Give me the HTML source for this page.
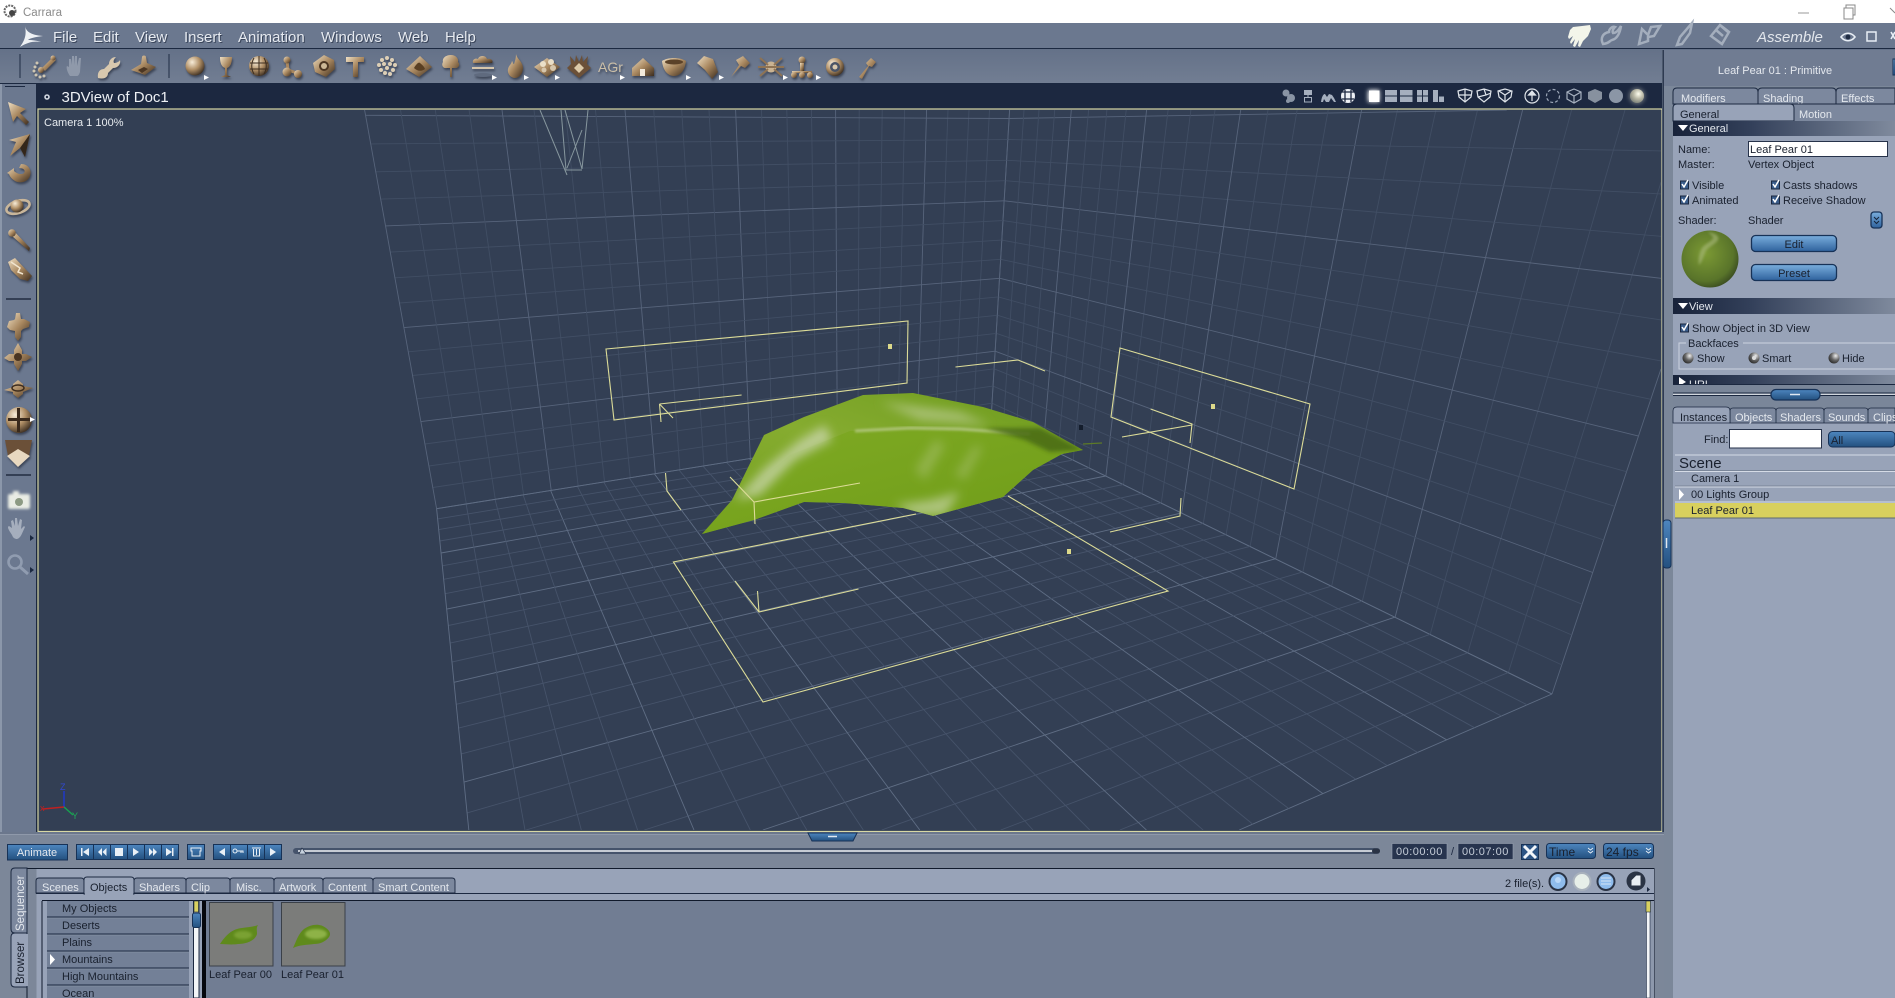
<!DOCTYPE html>
<html><head><meta charset="utf-8"><title>Carrara</title>
<style>
html,body{margin:0;padding:0;width:1895px;height:998px;overflow:hidden;background:#6f7b90}
svg{display:block;font-family:"Liberation Sans",sans-serif}
.m{font-size:15px;fill:#e6eaf0;filter:drop-shadow(1px 1px 0 rgba(20,30,50,.55))}
.s{font-size:11px;fill:#19202e}
.l{font-size:11px;fill:#e4e8ee}
.b{filter:drop-shadow(1px 2px 1px rgba(20,25,40,.55))}
</style></head><body>
<svg id="S" xmlns="http://www.w3.org/2000/svg" width="1895" height="998" viewBox="0 0 1895 998">
<defs>
<linearGradient id="hd" x1="0" x2="1" y1="0" y2="0"><stop offset="0" stop-color="#18233a"/><stop offset=".35" stop-color="#33405a"/><stop offset="1" stop-color="#7f8a9d"/></linearGradient>
<linearGradient id="blu" x1="0" x2="0" y1="0" y2="1"><stop offset="0" stop-color="#7aaedd"/><stop offset="1" stop-color="#2f629d"/></linearGradient>
<linearGradient id="blu2" x1="0" x2="0" y1="0" y2="1"><stop offset="0" stop-color="#4d86bf"/><stop offset="1" stop-color="#23507f"/></linearGradient>
<linearGradient id="bz" x1="0" x2="1" y1="0" y2="1"><stop offset="0" stop-color="#f0e0c4"/><stop offset=".5" stop-color="#a8875f"/><stop offset="1" stop-color="#3c2c1e"/></linearGradient>
<radialGradient id="bs" cx=".35" cy=".3" r=".8"><stop offset="0" stop-color="#f7ecd8"/><stop offset=".5" stop-color="#b08f66"/><stop offset="1" stop-color="#2e2218"/></radialGradient>
<radialGradient id="shd" cx=".42" cy=".4" r=".7"><stop offset="0" stop-color="#7c9a34"/><stop offset=".7" stop-color="#59742a"/><stop offset="1" stop-color="#2c3a1c"/></radialGradient>
<radialGradient id="rad" cx=".65" cy=".3" r=".8"><stop offset="0" stop-color="#eee"/><stop offset=".5" stop-color="#666"/><stop offset="1" stop-color="#222"/></radialGradient>
<radialGradient id="sph" cx=".6" cy=".35" r=".7"><stop offset="0" stop-color="#fffff0"/><stop offset=".5" stop-color="#b9b8a6"/><stop offset="1" stop-color="#7a7f78"/></radialGradient>
<linearGradient id="lf" x1="0" x2="1" y1="1" y2="0"><stop offset="0" stop-color="#74a01e"/><stop offset=".5" stop-color="#86ac30"/><stop offset="1" stop-color="#6c9a1c"/></linearGradient>
<linearGradient id="lf2" x1="0" x2="1" y1="0" y2="1"><stop offset="0" stop-color="#7faa24"/><stop offset="1" stop-color="#6f9c18"/></linearGradient>
<linearGradient id="top" x1="0" x2="0" y1="0" y2="1"><stop offset="0" stop-color="#647188"/><stop offset="1" stop-color="#727e93"/></linearGradient>
<filter id="bl" x="-40%" y="-40%" width="180%" height="180%"><feGaussianBlur stdDeviation="5"/></filter>
<filter id="bl1" x="-30%" y="-30%" width="160%" height="160%"><feGaussianBlur stdDeviation="1.2"/></filter>
<filter id="bl2" x="-40%" y="-40%" width="180%" height="180%"><feGaussianBlur stdDeviation="2"/></filter>
<filter id="gl" x="-60%" y="-60%" width="220%" height="220%"><feGaussianBlur stdDeviation="2"/></filter>
<clipPath id="vp"><rect x="38" y="110" width="1623" height="720"/></clipPath>
<clipPath id="rc"><rect x="1673" y="375" width="222" height="9"/></clipPath>
</defs>

<!-- title bar -->
<rect width="1895" height="23" fill="#fff"/>
<g transform="translate(10,11)"><circle r="5.5" fill="none" stroke="#666" stroke-width="2" stroke-dasharray="2 1"/><circle cx="2" cy="2" r="3" fill="#444"/></g>
<text x="23" y="16" font-size="11.5" fill="#8b8b8b">Carrara</text>
<path d="M1798 13h11" stroke="#999" fill="none"/>
<path d="M1844 8h9v11h-9zM1846 8V5h9v10h-2" stroke="#888" fill="none"/>
<path d="M1890 8l5 5" stroke="#888" fill="none"/>

<!-- menubar + toolbar -->
<rect y="23" width="1895" height="26" fill="#6b788f"/>
<rect y="48" width="1895" height="1.5" fill="#1b2840"/>
<rect y="49" width="1895" height="35" fill="url(#top)"/>
<rect y="83" width="1664" height="1.5" fill="#1b2840"/>
<path d="M25 26C26 31 30 35 43 36 36 37 30 38 28 40 33 40 38 41 41 42 34 41 28 42 20 47 24 41 27 36 25 26z" fill="#eef1f4"/>
<g class="m">
<text x="53" y="42">File</text><text x="93" y="42">Edit</text><text x="135" y="42">View</text><text x="184" y="42">Insert</text><text x="238" y="42">Animation</text><text x="321" y="42">Windows</text><text x="398" y="42">Web</text><text x="445" y="42">Help</text>
</g>
<!-- top right mode icons -->
<path d="M1570 30l3-3 9-1 8-1 1 4-3 7-5 5-3 6-2-1 1-6-4 7-2-1 2-7-4 5-1-2 3-6-4 3-1-2z" fill="#f3f5ea"/>
<path d="M1603 44c-3-6 0-11 6-12 0-3 3-6 6-5-2 2-3 4-2 6 3 0 5-2 8-7-1 7-4 13-9 14-3 1-2 3-9 4z" fill="none" stroke="#a4aebd" stroke-width="2.5"/>
<path d="M1639 44l3-15 6 6 3-8 9-1-6 10-6 1 0 4z" fill="none" stroke="#a4aebd" stroke-width="2.5"/>
<path d="M1677 45l3-8 12-14-2 10-8 11z" fill="none" stroke="#a4aebd" stroke-width="2.5"/>
<path d="M1711 36l9-11 9 7-7 12zM1716 30l7 6M1721 26l7 6" fill="none" stroke="#a4aebd" stroke-width="2.5"/>
<text x="1757" y="42" font-size="15" font-style="italic" fill="#e2e6ec">Assemble</text>
<g fill="none" stroke="#e8eef5"><path d="M1841 37c4-5 10-5 14 0-4 5-10 5-14 0z" stroke-width="1.6"/><circle cx="1848" cy="37" r="2.4" fill="#1f2c44" stroke="none"/><rect x="1867" y="32" width="9" height="9" stroke-width="1.5"/><path d="M1891 32l4 7M1895 32l-4 7" stroke-width="1.6"/></g>

<!-- toolbar icons -->
<path d="M20 54v24M169 54v24" stroke="#1f2c44"/>
<g class="b" fill="url(#bz)" stroke="none">
<g transform="translate(45,67)"><path d="M-3 1L8-10l3 3L0 4z"/><circle cx="8" cy="-9" r="2.5"/><circle cx="-4" cy="3" r="3"/><g fill="#cfc6b2"><circle cx="-10" cy="0" r="1.5"/><circle cx="-11" cy="4" r="1.5"/><circle cx="-9" cy="8" r="1.5"/><circle cx="-5" cy="10" r="1.5"/><circle cx="-1" cy="9" r="1.5"/><circle cx="-8" cy="-4" r="1.5"/></g></g>
<g transform="translate(109,67)"><path d="M-11 11c-1-7 3-9 6-9l5-5c0-4 3-7 7-7-2 2-3 4-2 6 2 0 5-1 6-3 1 4-2 8-7 8l-5 5c0 3-2 7-10 5z" fill="#d8c8ae"/></g>
<g transform="translate(143,67)"><path d="M-12 3L-2-3l1-7c0-2 4-2 4 0l1 6 9 4-11 8z"/><path d="M-5 3l6-3 4 2-6 4z" fill="#4c3622"/></g>
<circle cx="195" cy="66" r="9.5" fill="url(#bs)"/>
<g transform="translate(226,67)"><path d="M-6-10H6C6-3 4 0 1 1v7l4 2H-5l4-2V1C-4 0-6-3-6-10z"/></g>
<g transform="translate(259,66)"><circle r="10" fill="url(#bs)"/><path d="M-9-3H9M-9 3H9M0-10V10M-5-8c-3 5-3 11 0 16M5-8c3 5 3 11 0 16" stroke="#3c2c1e" fill="none"/></g>
<g transform="translate(291,67)"><path d="M-4-6l1 9L6 6" stroke="#a8875f" stroke-width="3" fill="none"/><circle cx="-4" cy="-7" r="3.5"/><circle cx="-4" cy="5" r="4.5"/><circle cx="7" cy="7" r="4"/></g>
<g transform="translate(324,66)"><path d="M0-11L10-6 11 3 2 11-9 6-11-3z"/><circle r="5" fill="#4c3622"/><circle r="3" fill="#cdb896"/></g>
<g transform="translate(355,67)"><path d="M-9-10H9v5H3V10H-2V-5H-9z"/></g>
<g transform="translate(387,66)" fill="#ddcfb6"><circle cx="0" cy="-8" r="2"/><circle cx="5" cy="-6" r="2"/><circle cx="-5" cy="-6" r="2"/><circle cx="-8" cy="-1" r="2"/><circle cx="8" cy="-1" r="2"/><circle cx="-3" cy="-2" r="2"/><circle cx="3" cy="-2" r="2"/><circle cx="0" cy="2" r="2"/><circle cx="-6" cy="4" r="2"/><circle cx="6" cy="4" r="2"/><circle cx="-2" cy="7" r="2"/><circle cx="3" cy="8" r="2"/></g>
<g transform="translate(419,67)"><path d="M-13 2L1-11l12 11L0 10z"/><path d="M-5 1c3-5 5-6 6-5s4 3 5 6c-4 3-8 2-11-1z" fill="#5a3f22"/></g>
<g transform="translate(451,66)"><path d="M0-11c5 0 8 4 7 7 3 3 0 7-4 6l-2 0V11H-1V2l-3 0c-4 1-6-3-4-6-1-4 3-7 8-7z"/></g>
<g transform="translate(483,62)"><path d="M-10 1c-1-4 3-5 5-4 1-4 8-4 9 0 4-1 7 2 5 4z"/><path d="M-11 5H11v2H-11z" fill="#d6c6ac"/><ellipse cy="13" rx="9" ry="2" fill="#5f6a7e"/></g>
<g transform="translate(515,66)"><path d="M1-12c1 5 7 8 7 14 0 6-4 10-8 10s-8-4-7-9c1-4 3-4 4-8 1 1 1 3 2 3 1-3 2-6 2-10z"/></g>
<g transform="translate(547,67)"><path d="M-13 0L0-9 13 0 0 10z"/><circle cx="-4" cy="-3" r="3" fill="#eadfc8"/><circle cx="4" cy="-5" r="3" fill="#eadfc8"/><circle cx="6" cy="1" r="3" fill="#d6c6ac"/><circle cx="-3" cy="3" r="2.5" fill="#d6c6ac"/></g>
<g transform="translate(579,67)"><path d="M-12 1L-8-3-9-11-4-5-3-12 0-5 3-12 4-5 9-11 8-3 12 1 0 11z" fill="#6b5038"/><path d="M-5 1L0-4 5 1 0 6z" fill="#dcc9a8"/></g>
<text x="598" y="72" font-size="14" fill="#cbbfa8">AGr</text>
<g transform="translate(643,67)"><path d="M-11 1L0-9 11 1V9H-11z"/><rect x="-3" y="2" width="5" height="7" fill="#f3eadb"/></g>
<g transform="translate(674,67)"><path d="M-12-6C-6-10 6-10 12-6 11 4 6 9 0 9S-11 4-12-6z"/><ellipse cy="-5" rx="9" ry="2.5" fill="#5b4229"/></g>
<g transform="translate(707,67)"><path d="M-10-4L-3-11 6-8 11 5 5 12-2 3z"/></g>
<g transform="translate(740,67)"><path d="M-9 10L-1-2-4-7 3-11 10-4 5 1 1-1z"/></g>
<g transform="translate(771,67)"><circle r="5.5" fill="#c9b393"/><path d="M-11-9L-3-2M11-9L3-2M-13 0H13M-11 9L-3 2M11 9L3 2" stroke="#8e7354" stroke-width="2"/></g>
<g transform="translate(802,67)"><circle cy="-7" r="3.5"/><rect x="-2" y="-4" width="4" height="8"/><path d="M-10 4H10v2H-10z"/><circle cx="-8" cy="8" r="3"/><circle cx="8" cy="8" r="3"/><circle cy="8" r="3"/></g>
<g transform="translate(835,67)"><circle r="9" fill="url(#bs)"/><circle r="5" fill="#4a5466"/><circle r="2.5" fill="#d9c9ae"/></g>
<g transform="translate(867,67)"><path d="M-8 10L1-1-1-4 4-9 9-5 5 0 2-1-5 12z"/></g>
</g>
<g transform="translate(77,67)" fill="#8f99aa"><path d="M-7 9c-3-4-4-9-3-10l2 1v-8l2 0 1 6v-9h2l1 9V-11h2l0 10 2-8 2 0-1 14c-1 3-2 4-3 4z"/></g>
<g fill="#fff"><path d="M204 75l5 2.5-5 2.5z"/><path d="M492 75l5 2.5-5 2.5zM524 75l5 2.5-5 2.5zM555 75l5 2.5-5 2.5zM620 75l5 2.5-5 2.5zM686 75l5 2.5-5 2.5zM719 75l5 2.5-5 2.5zM783 75l5 2.5-5 2.5zM816 75l5 2.5-5 2.5z"/></g>

<!-- left strip -->
<rect y="84" width="36" height="750" fill="#6b788f"/><rect y="84" width="2" height="750" fill="#8b97aa"/>
<rect x="5" y="86" width="20" height="1" fill="#1b2840"/>
<path d="M6 299h25M6 475h25" stroke="#141d30" stroke-width="1.2"/>
<g class="b" fill="url(#bz)">
<path d="M8 102l18 7-6 4 9 9-3 3-9-9-4 6z"/>
<path d="M30 134l-5 23-5-9-10 8 6-14-7-2z"/><path d="M30 134l-5 23-5-9z" fill="#33261a"/>
<path d="M21 164c8 0 11 7 9 12-2 6-10 8-15 5-3-2-5-4-6-7l-2-1 7-5 0 3c3 3 8 4 10 2 2-3-1-5-5-5z"/>
<ellipse cx="18" cy="207" rx="12" ry="6" transform="rotate(-18 18 207)" fill="none" stroke="#c9b69a" stroke-width="2.6"/><circle cx="17" cy="206" r="6.5" fill="url(#bs)"/>
<path d="M9 232l4-2 17 18-1 3-17-15z"/><circle cx="12" cy="233" r="3.8"/>
<path d="M8 262l7-4 17 18-4 5-8-2-9-9z"/><path d="M11 262l9 6-2 4 5 2" fill="none" stroke="#f1e5cf" stroke-width="1.5"/>
<path d="M16 313h4l1 6h3l6 3-1 5-6 2-2 2v6l-3 4-3-4v-6l-5-1-3-3 2-6 5-1 1-1z"/>
<path d="M18 343l4 7v4h4l6 3-6 4h-4v3l-4 7-4-7v-3h-5l-5-3 5-4h5v-4z"/><circle cx="18" cy="357" r="4" fill="#4a3522"/>
<path d="M18 380l5 4v2l10 2-10 4v2l-5 4-5-4v-2l-9-2 9-3v-3z"/><ellipse cx="18" cy="388" rx="6" ry="3" fill="none" stroke="#3e2d1e" stroke-width="1.5"/>
<circle cx="19" cy="420" r="13" fill="url(#bs)"/><path d="M8 418h22v3H8zM17 408h3v24h-3z" fill="#3a2a1c"/>
<path d="M5 440L32 440 29 456 18 450 8 456Z" fill="#6b5038"/><path d="M18 449L30 456 18 467 7 456Z" fill="#e8d8c0"/>
</g>
<path d="M30 417l5 2.5-5 2.5z" fill="#fff"/>
<g fill="#e9ece4" filter="url(#bl1)"><rect x="8" y="494" width="22" height="15" rx="2"/><rect x="13" y="491" width="6" height="3"/></g><circle cx="19" cy="502" r="4" fill="#8c9a83"/>
<path d="M12 535c-4-6-5-8-3-9l3 2-1-7 2-1 2 6 0-8 2 0 1 8 2-7 2 1-1 9 3-3 1 1c-3 6-4 11-8 12-2 0-4-1-5-4z" fill="#a5aebd"/>
<path d="M30 535l4 3-4 3z" fill="#1b2840"/>
<circle cx="15" cy="562" r="6.5" fill="none" stroke="#909cb0" stroke-width="2.6"/><path d="M20 567l8 7" stroke="#909cb0" stroke-width="3"/>
<path d="M30 567l4 3-4 3z" fill="#1b2840"/>

<!-- 3D view title -->
<rect x="36" y="84" width="1628" height="748" fill="#1c2840"/>
<circle cx="47" cy="97" r="2" fill="none" stroke="#d0d6df" stroke-width="1.6"/>
<text x="61.5" y="102" font-size="15" fill="#eef1f5">3DView of Doc1</text>
<!-- viewport -->
<rect x="38" y="109" width="1624" height="722.5" fill="#333f54" stroke="#d8d8a4" stroke-width="1.2"/>
<g id="grid" clip-path="url(#vp)" fill="none" stroke-width="1">
<path d="M540 110l27 65M561 110l5 60 16 0M588 110l-6 59M565 110l17 59M582 130l-15 38" stroke="#87979e" fill="none"/>
</g>
<g clip-path="url(#vp)" fill="none" stroke="#dcdc98" stroke-width="1.1">
<path d="M606 349L908 321 907 383 614 420Z"/>
<path d="M659.5 404L741.6 395M659.5 404L661 422M659.5 404L673 418"/>
<path d="M955.5 367L1018 360 1045 371"/>
<path d="M1120 348L1310 404 1294 489 1111 417Z"/>
<path d="M1150.6 409L1192 424 1190 443M1192 425L1122 437"/>
<path d="M916 514L673.4 562 763 702 1168 591 1008 496"/>
<path d="M858.5 589L759 612 735 581M759 612L757.5 591"/>
<path d="M665.5 473L667 491 681 510"/>
<path d="M1181 498L1180 516 1110 532"/>
</g>
<g fill="#dcd98a"><rect x="888" y="344" width="4" height="5"/><rect x="1211" y="404" width="4" height="5"/><rect x="1067" y="549" width="4" height="5"/></g>
<rect x="1079" y="425" width="4" height="5" fill="#141d2c"/>
<path d="M1083 444L1102 443" stroke="#5d7a28" stroke-width="1.2"/>
<!-- leaf -->
<path d="M702 534L732 500 764 435 804 417 863 395 913 393 983 407 1033 422 1083 450 1062 454 1033 470 1003 497 933 516 903 508 844 503 804 502 754 520Z" fill="url(#lf)"/>
<clipPath id="lc"><path d="M702 534L732 500 764 435 804 417 863 395 913 393 983 407 1033 422 1083 450 1062 454 1033 470 1003 497 933 516 903 508 844 503 804 502 754 520Z"/></clipPath>
<g clip-path="url(#lc)">
<path d="M702 534L745 492 790 455 850 431 910 430 960 431 1040 432 1083 450 1062 454 1033 470 1003 497 933 516 903 508 844 503 804 502 754 520Z" fill="url(#lf2)"/>
<g filter="url(#bl)" fill="#d3dcbc">
<path d="M735 500L765 468 800 440 825 425 832 440 795 460 760 495Z" opacity=".7"/>
<path d="M880 402L960 412 990 425 920 420Z" opacity=".5"/>
<path d="M895 505L930 500 960 492 945 515 915 516Z" opacity=".6"/>
<path d="M915 470L935 440 945 445 925 480Z" opacity=".28"/>
<path d="M955 475L975 445 982 448 965 480Z" opacity=".28"/>
</g>
<path d="M855 431L910 428 960 429 1030 434" stroke="#c4d19c" stroke-width="2.5" fill="none" filter="url(#bl1)" opacity=".8"/>
<path d="M985 428L1040 428 1083 450 1050 452 1025 440Z" fill="#4a6a16" opacity=".85" filter="url(#bl2)"/>
</g>
<path d="M730 477L754 502 860 483M754 502L755 524" fill="none" stroke="#dcdc98" stroke-width="1.1"/>
<!-- axes -->
<path d="M64 807V791" stroke="#2038c8" stroke-width="1.5"/><path d="M64 807L43 809" stroke="#c02020" stroke-width="1.5"/><path d="M64 807L73 815" stroke="#18a050" stroke-width="1.5"/>
<text x="60" y="790" font-size="9" fill="#3048d0">Z</text><text x="40" y="811" font-size="9" fill="#c02020">x</text><text x="72" y="819" font-size="9" fill="#20a858">Y</text>
<text x="44" y="126" font-size="11" fill="#e7ebef">Camera 1 100%</text>

<!-- viewport icons -->
<g fill="#a5afbe">
<g opacity=".8"><circle cx="1286" cy="93" r="3.5"/><circle cx="1291" cy="98" r="4"/><circle cx="1288" cy="101" r="2"/></g>
<rect x="1304" y="90" width="8" height="5"/><path d="M1308 95v2" stroke="#a5afbe"/><rect x="1304.5" y="97.5" width="7" height="4.5" fill="none" stroke="#a5afbe"/>
<path d="M1321 102c1-7 3-8 4-8l2 3 2-3 3 1 2 3 2 4-2 0-3-4-2 4-3 0-2-3-1 3z"/>
<g><circle cx="1348" cy="96" r="7" fill="#eef1f5"/><path d="M1342 92h12M1342 99h12M1345 90v12M1351 90v12" stroke="#1c2840" stroke-width="1.3"/></g>
<rect x="1368" y="90" width="11.5" height="12" fill="#fff" filter="url(#gl)"/><rect x="1369" y="90.5" width="10.5" height="11.5" fill="#fff"/>
<path d="M1385 90h12v5.500h-12zM1385 96.500h12v5.500h-12zM1400 90h12.500v5.500h-12.500zM1400 96.500h12.500v5.500h-12.500zM1417 90h5v5.500h-5zM1423 90h5v5.500h-5zM1417 96.500h5v5.500h-5zM1423 96.500h5v5.500h-5zM1433 90h5v12h-5zM1439 96.500h5v5.500h-5z"/>
</g>
<g fill="none" stroke="#dfe4ea" stroke-width="1.2">
<path d="M1458 91l7-2 7 2-1 6-6 5-6-5zM1465 89v13M1459 95l12 0"/>
<path d="M1477 91l7-2 7 2-1 6-6 5-6-5zM1484 89l2 6-8 2M1486 95l5-2"/>
<path d="M1498 91l7-2 7 2-1 6-6 5-6-5zM1505 95v7M1499 91l6 4 6-4"/>
<circle cx="1532" cy="96" r="7"/><path d="M1532 91l-3.500 4h7zM1532 95v6" fill="#dfe4ea"/>
<circle cx="1553" cy="96" r="6.500" stroke="#9aa5b6" stroke-dasharray="3 2"/>
<path d="M1574 89l7 3v7l-7 4-7-4v-7zM1574 96v7M1567 92l7 4 7-4" stroke="#a6b0bf"/>
</g>
<path d="M1595 89l7 3v7l-7 4-7-4v-7z" fill="#87919f"/>
<circle cx="1616" cy="96" r="7" fill="#8b96a6"/>
<circle cx="1637" cy="96" r="8" fill="#e8e6d4" opacity=".4" filter="url(#gl)"/>
<circle cx="1637" cy="96" r="7" fill="url(#sph)"/>

<!-- right side -->
<rect x="1662" y="50" width="233" height="948" fill="#7b8799"/>
<rect x="1662.500" y="50" width="1.300" height="785" fill="#1b2840"/>
<rect x="1664" y="50" width="231" height="36" fill="#707c92"/>
<text x="1775" y="74" text-anchor="middle" class="l">Leaf Pear 01 : Primitive</text>
<rect x="1893" y="59" width="2" height="16" fill="url(#blu)" stroke="#173257"/>
<rect x="1673" y="121" width="222" height="264" fill="#98a3b8"/>
<!-- tabs -->
<path d="M1673 104v-12q0-4 4-4h77q4 0 4 4v12zM1758 104V92q0-4 4-4h70q4 0 4 4v12zM1836 104V92q0-4 4-4h55v16z" fill="#7c889e" stroke="#1b2840"/>
<text x="1681" y="102" class="l">Modifiers</text><text x="1763" y="102" class="l">Shading</text><text x="1841" y="102" class="l">Effects</text>
<rect x="1794" y="104" width="101" height="17" fill="#7c889e"/><path d="M1794 104h101" stroke="#1b2840"/>
<path d="M1673 121v-13q0-4 4-4h113q4 0 4 4v13z" fill="#98a3b8" stroke="#1b2840"/>
<text x="1680" y="118" class="s">General</text><text x="1799" y="118" class="l">Motion</text>
<rect x="1673" y="121" width="222" height="15" fill="url(#hd)"/>
<path d="M1678 125h10l-5 6z" fill="#fff"/><text x="1689" y="132" class="l">General</text>
<text x="1678" y="153" class="s">Name:</text>
<rect x="1748.500" y="141.500" width="139" height="15" fill="#fff" stroke="#26324a"/>
<text x="1750" y="153" class="s">Leaf Pear 01</text>
<text x="1678" y="168" class="s">Master:</text><text x="1748" y="168" class="s">Vertex Object</text>
<g fill="#3a5c8a" stroke="#1b2840">
<rect x="1680.500" y="181" width="8" height="8"/><rect x="1680.500" y="196" width="8" height="8"/><rect x="1771.500" y="181" width="8" height="8"/><rect x="1771.500" y="196" width="8" height="8"/><rect x="1680.500" y="324" width="8" height="8"/>
</g>
<g fill="none" stroke="#fff" stroke-width="1.500"><path d="M1682 184l2 3 4-7M1682 199l2 3 4-7M1773 184l2 3 4-7M1773 199l2 3 4-7M1682 327l2 3 4-7"/></g>
<text x="1692" y="189" class="s">Visible</text><text x="1783" y="189" class="s">Casts shadows</text>
<text x="1692" y="204" class="s">Animated</text><text x="1783" y="204" class="s">Receive Shadow</text>
<text x="1678" y="224" class="s">Shader:</text><text x="1748" y="224" class="s">Shader</text>
<rect x="1871" y="212" width="11" height="16" rx="3" fill="url(#blu)" stroke="#173257" stroke-width="1.300"/>
<path d="M1874 217l2.500 2.500 2.500-2.500M1874 221l2.500 2.500 2.500-2.500" fill="none" stroke="#14233a"/>
<circle cx="1710" cy="259" r="28.500" fill="url(#shd)"/>
<path d="M1708 232c5 1 12 3 10 8-3 5-11 7-13 13-2 5-3 9-6 12-1-5 0-11 2-15 2-6 11-8 12-12 0-2-3-4-5-6z" fill="#aebd82" opacity=".55" filter="url(#bl1)"/>
<rect x="1751.500" y="235.500" width="85" height="16" rx="4" fill="url(#blu)" stroke="#173257" stroke-width="1.300"/><text x="1794" y="248" text-anchor="middle" class="s">Edit</text>
<rect x="1751.500" y="264.500" width="85" height="16" rx="4" fill="url(#blu)" stroke="#173257" stroke-width="1.300"/><text x="1794" y="277" text-anchor="middle" class="s">Preset</text>
<rect x="1673" y="298" width="222" height="16" fill="url(#hd)"/>
<path d="M1678 303h10l-5 6z" fill="#fff"/><text x="1689" y="310" class="l" font-size="12">View</text>
<text x="1692" y="332" class="s">Show Object in 3D View</text>
<path d="M1686 343h-7v26h216M1743 343h152" fill="none" stroke="#ccd3df"/>
<text x="1688" y="347" class="s">Backfaces</text>
<circle cx="1688" cy="358" r="5.500" fill="url(#rad)"/><text x="1697" y="362" class="s">Show</text>
<circle cx="1754" cy="358" r="5.500" fill="url(#rad)"/><circle cx="1754" cy="358" r="2" fill="#ddd"/><text x="1762" y="362" class="s">Smart</text>
<circle cx="1834" cy="358" r="5.500" fill="url(#rad)"/><text x="1842" y="362" class="s">Hide</text>
<rect x="1673" y="375" width="222" height="9" fill="url(#hd)"/>
<g clip-path="url(#rc)"><path d="M1679 377v9l7-4z" fill="#fff"/><text x="1689" y="388" class="l">URL</text></g>
<rect x="1673" y="384" width="222" height="23" fill="#7a8699"/>
<path d="M1673 384.500h222" stroke="#1b2840"/>
<path d="M1673 393h222M1673 395.500h222" stroke="#1b2840"/><path d="M1673 394.300h222" stroke="#eef2f6"/>
<rect x="1771" y="389.500" width="49" height="10.500" rx="5" fill="url(#blu2)" stroke="#173257" stroke-width="1.200"/><path d="M1790 394.500h10" stroke="#dfe8f2" stroke-width="1.500"/>
<rect x="1673" y="423" width="222" height="575" fill="#98a3b8"/>
<path d="M1730 423v-12q0-3 3-3h40q3 0 3 3v12zM1776 423v-12q0-3 3-3h42q3 0 3 3v12zM1824 423v-12q0-3 3-3h38q3 0 3 3v12zM1868 423v-12q0-3 3-3h24v15z" fill="#7c889e" stroke="#1b2840" stroke-width=".8"/>
<path d="M1673 423v-12q0-4 4-4h49q4 0 4 4v12z" fill="#98a3b8" stroke="#1b2840" stroke-width=".8"/>
<text x="1680" y="421" class="s">Instances</text><text x="1735" y="421" class="l">Objects</text><text x="1780" y="421" class="l">Shaders</text><text x="1828" y="421" class="l">Sounds</text><text x="1873" y="421" class="l">Clips</text>
<text x="1704" y="443" class="s">Find:</text>
<rect x="1729.500" y="429.500" width="92" height="18.500" fill="#fff" stroke="#26324a"/>
<rect x="1828.500" y="431.500" width="66.500" height="15.500" rx="4" fill="url(#blu2)" stroke="#173257"/><text x="1831" y="444" class="s">All</text>
<path d="M1675 455h220" stroke="#d5dbe6"/>
<text x="1679" y="468" font-size="15" fill="#19202e">Scene</text>
<path d="M1675 471.500h220M1675 487h220M1675 502h220" stroke="#d5dbe6"/><path d="M1675 470.500h220M1675 486h220" stroke="#7a8699"/>
<text x="1691" y="482" class="s">Camera 1</text>
<path d="M1679 489v11l5-5.500z" fill="#fff"/><text x="1691" y="498" class="s">00 Lights Group</text>
<rect x="1675" y="503" width="220" height="14.500" fill="#d8d05e"/><path d="M1675 518h220" stroke="#5e6a72"/>
<text x="1691" y="514" class="s">Leaf Pear 01</text>
<!-- side handle -->
<rect x="1663" y="520" width="8" height="48" rx="3" fill="url(#blu2)" stroke="#173257"/><path d="M1666.500 538v10" stroke="#e0e8f0" stroke-width="1.500"/>

<!-- bottom -->
<rect y="832" width="1664" height="166" fill="#7c8799"/><path d="M0 834h1664" stroke="#a2abbb"/>
<rect x="0" y="832" width="1664" height="2" fill="#6b778c"/>
<path d="M808 833h49l-4 8h-41z" fill="url(#blu2)" stroke="#173257"/><path d="M828 836.500h9" stroke="#dfe8f2" stroke-width="1.500"/>
<rect x="7.500" y="844.500" width="60" height="15.500" fill="url(#blu2)" stroke="#173257"/><text x="37" y="856" text-anchor="middle" class="l">Animate</text>
<g fill="url(#blu2)" stroke="#173257">
<rect x="76.500" y="844.500" width="17" height="15"/><rect x="93.500" y="844.500" width="17" height="15"/><rect x="110.500" y="844.500" width="17" height="15"/><rect x="127.500" y="844.500" width="17" height="15"/><rect x="144.500" y="844.500" width="17" height="15"/><rect x="161.500" y="844.500" width="17" height="15"/>
<rect x="187.500" y="844.500" width="17" height="15"/>
<rect x="213.500" y="844.500" width="17" height="15"/><rect x="230.500" y="844.500" width="17" height="15"/><rect x="247.500" y="844.500" width="17" height="15"/><rect x="264.500" y="844.500" width="17" height="15"/>
</g>
<g fill="#eaf0f6">
<path d="M81 848h1.500v8H81zM89 848v8l-6-4zM102 848v8l-4-4zM106.500 848v8l-4-4zM115 848h8v8h-8zM133 848l6 4-6 4zM149 848l4 4-4 4zM153 848l4 4-4 4zM166 848l6 4-6 4zM172 848h1.500v8H172z"/>
<path d="M191 848h10v3h-1v5h-8v-5h-1z" fill="none" stroke="#eaf0f6"/>
<path d="M225 848v8l-6-4zM270 848l6 4-6 4z"/>
</g>
<g fill="none" stroke="#eaf0f6"><circle cx="235" cy="851" r="2"/><path d="M237 851h6v2M241 851v2"/><path d="M252 848h9M253.500 849v7h6v-7M256.500 849v6"/></g>
<rect x="293" y="848" width="1087" height="6" rx="3" fill="#45536b"/><path d="M298 851h1078" stroke="#f1f4f7" stroke-width="1.500"/><rect x="1372" y="848.500" width="8" height="5" rx="2.500" fill="#2a3345"/><path d="M299 854l3-6 4 6z" fill="#c7d2de" stroke="#1b2840" stroke-width=".6"/>
<rect x="1392" y="843.500" width="55" height="16" fill="#27344e" stroke="#98a2b1" stroke-width=".6"/><text x="1396" y="855" class="l" letter-spacing=".5" style="fill:#c4ccd7">00:00:00</text>
<text x="1451" y="855" font-size="11" fill="#1c2840">/</text>
<rect x="1458" y="843.500" width="55" height="16" fill="#27344e" stroke="#98a2b1" stroke-width=".6"/><text x="1462" y="855" class="l" letter-spacing=".5" style="fill:#c4ccd7">00:07:00</text>
<rect x="1521.500" y="844.500" width="17" height="15" fill="#2c5484" stroke="#173257"/><path d="M1524 846l12 12M1536 846l-12 12" stroke="#f2f6fa" stroke-width="3"/>
<rect x="1546.500" y="843.500" width="49" height="15" rx="3" fill="url(#blu2)" stroke="#173257"/><text x="1549" y="856" class="s" style="font-size:12px">Time</text><path d="M1588 848l2.500 2 2.500-2M1588 851l2.500 2 2.500-2" fill="none" stroke="#e8eef5" stroke-width=".9"/>
<rect x="1603.500" y="843.500" width="50" height="15" rx="3" fill="url(#blu2)" stroke="#173257"/><text x="1606" y="856" class="s" style="font-size:12px">24 fps</text><path d="M1646 848l2.500 2 2.500-2M1646 851l2.500 2 2.500-2" fill="none" stroke="#e8eef5" stroke-width=".9"/>

<!-- browser -->
<rect x="27" y="868.500" width="1627" height="129.500" fill="#7c8799"/>
<path d="M27 998V868.500H1654V998" fill="none" stroke="#101a2c"/>
<rect x="36" y="869" width="1618" height="129" fill="#98a3b8"/>
<path d="M36 869v129" stroke="#7c8799"/>
<path d="M27 933H15q-4 0-4-4V872q0-4 4-4h12z" fill="#7c889e" stroke="#1b2840"/>
<path d="M27 987H15q-4 0-4-4V937q0-4 4-4h12z" fill="#98a3b8" stroke="#1b2840"/><path d="M27 934v52" stroke="#98a3b8" stroke-width="2"/>
<text transform="translate(24,931) rotate(-90)" font-size="11.500" fill="#e4e8ee">Sequencer</text>
<text transform="translate(24,984) rotate(-90)" font-size="11.500" fill="#19202e">Browser</text>
<path d="M36 893v-12q0-3 3-3h42q3 0 3 3v12zM134 893v-12q0-3 3-3h46q3 0 3 3v12zM186 893v-12q0-3 3-3h38q3 0 3 3v12zM230 893v-12q0-3 3-3h38q3 0 3 3v12zM274 893v-12q0-3 3-3h43q3 0 3 3v12zM323 893v-12q0-3 3-3h44q3 0 3 3v12zM373 893v-12q0-3 3-3h76q3 0 3 3v12z" fill="#7c889e" stroke="#1b2840" stroke-width=".9"/>
<path d="M36 893.500H1654" stroke="#1b2840"/>
<path d="M84 894v-14q0-3 3-3h44q3 0 3 3v14z" fill="#98a3b8" stroke="#1b2840" stroke-width=".9"/><path d="M85 894h48" stroke="#98a3b8" stroke-width="2"/>
<text x="42" y="891" class="l">Scenes</text><text x="90" y="891" class="s">Objects</text><text x="139" y="891" class="l">Shaders</text><text x="191" y="891" class="l">Clip</text><text x="236" y="891" class="l">Misc.</text><text x="279" y="891" class="l">Artwork</text><text x="328" y="891" class="l">Content</text><text x="378" y="891" class="l">Smart Content</text>
<text x="1505" y="887" class="s">2 file(s).</text>
<g stroke="#2a3344" stroke-width="2"><circle cx="1558" cy="881.500" r="8.500" fill="#8fbcec"/><circle cx="1582" cy="881.500" r="8.500" fill="#e7efe9" stroke="#a8b1bc"/><circle cx="1606" cy="881.500" r="8.500" fill="#8fbcec"/></g>
<path d="M1601 878h10M1601 881h10M1601 884h10" stroke="#d5e4f5"/><circle cx="1558" cy="880" r="3" fill="#bad8f8"/>
<circle cx="1636" cy="881" r="9.500" fill="#2a3344"/><path d="M1631 886v-6l5-5h5v11z" fill="#e8edf2" stroke="#2a3344"/><path d="M1647 887l3 2.500-3 2.500z" fill="#1b2840"/>
<path d="M42 900.500H1654" stroke="#10192b"/>
<rect x="42" y="901" width="160" height="97" fill="#98a3b8"/>
<path d="M42 901v97" stroke="#10192b"/>
<rect x="47" y="901" width="142" height="97" fill="#738097"/>
<path d="M47 917h142M47 934h142M47 951h142M47 968h142M47 985h142" stroke="#1b2840"/><path d="M47 918h142M47 935h142M47 952h142M47 969h142M47 986h142" stroke="#8692a6" stroke-width=".8"/>
<text x="62" y="912" class="s">My Objects</text><text x="62" y="929" class="s">Deserts</text><text x="62" y="946" class="s">Plains</text><text x="62" y="963" class="s">Mountains</text><text x="62" y="980" class="s">High Mountains</text><text x="62" y="997" class="s">Ocean</text>
<path d="M50 954v11l5-5.500z" fill="#fff"/>
<rect x="193.500" y="901" width="5.500" height="97" fill="#f4f6f8" stroke="#1b2840"/>
<rect x="194" y="901" width="4.500" height="11" fill="#d8d060" stroke="#1b2840" stroke-width=".6"/>
<rect x="192.500" y="913" width="8" height="14.500" rx="2" fill="url(#blu2)" stroke="#173257"/>
<rect x="202" y="901" width="4" height="97" fill="#05070d"/>
<rect x="206" y="901" width="1440" height="97" fill="#717d93"/>
<rect x="1650" y="901" width="4" height="97" fill="#8d98ac"/>
<rect x="1646.500" y="901" width="3.500" height="97" fill="#f4f6f8" stroke="#1b2840" stroke-width=".6"/>
<rect x="1646" y="901" width="4.500" height="11" fill="#d8d060" stroke="#1b2840" stroke-width=".6"/>
<rect x="209.500" y="902.500" width="63.500" height="63.500" fill="#7b7c7a" stroke="#3a4048"/>
<rect x="281.500" y="902.500" width="63.500" height="63.500" fill="#7b7c7a" stroke="#3a4048"/>
<path d="M220 944C226 935 232 929 242 928 248 927 253 927 258 925 256 928 257 930 257 934 255 941 246 944 238 944 231 945 226 944 220 944Z" fill="#5f8a1c"/><ellipse cx="243" cy="935" rx="9" ry="4" fill="#86ac3c" opacity=".7" filter="url(#bl1)"/>
<path d="M293 948C296 942 298 934 304 929 311 924 320 923 326 928 330 931 331 934 329 937 325 942 320 944 314 944 306 945 299 945 293 948Z" fill="#5f8a1c"/><ellipse cx="316" cy="934" rx="11" ry="5" fill="#a2c45a" opacity=".7" filter="url(#bl1)"/>
<text x="209" y="978" class="s">Leaf Pear 00</text><text x="281" y="978" class="s">Leaf Pear 01</text>
</svg>
<script>
(function(){
function H(q){var x0=q[0][0],y0=q[0][1],x1=q[1][0],y1=q[1][1],x2=q[2][0],y2=q[2][1],x3=q[3][0],y3=q[3][1];
var dx1=x1-x2,dx2=x3-x2,sx=x0-x1+x2-x3,dy1=y1-y2,dy2=y3-y2,sy=y0-y1+y2-y3,den=dx1*dy2-dx2*dy1,
g=(sx*dy2-dx2*sy)/den,h=(dx1*sy-sx*dy1)/den,a=x1-x0+g*x1,b=x3-x0+h*x3,d=y1-y0+g*y1,e=y3-y0+h*y3;
return function(u,v){var w=g*u+h*v+1;return [(a*u+b*v+x0)/w,(d*u+e*v+y0)/w];};}
var G=document.getElementById('grid'),NS='http://www.w3.org/2000/svg',X0=38,X1=1661,Y0=110,Y1=830;
function clip(p,r){var t0=0,t1=1,dx=r[0]-p[0],dy=r[1]-p[1],P=[-dx,dx,-dy,dy],Q=[p[0]-X0,X1-p[0],p[1]-Y0,Y1-p[1]];
for(var i=0;i<4;i++){if(P[i]==0){if(Q[i]<0)return null;}else{var t=Q[i]/P[i];if(P[i]<0){if(t>t1)return null;if(t>t0)t0=t;}else{if(t<t0)return null;if(t<t1)t1=t;}}}
return [[p[0]+t0*dx,p[1]+t0*dy],[p[0]+t1*dx,p[1]+t1*dy]];}
function L(p,r,col){var c=clip(p,r);if(!c)return;var l=document.createElementNS(NS,'line');l.setAttribute('x1',c[0][0].toFixed(1));l.setAttribute('y1',c[0][1].toFixed(1));l.setAttribute('x2',c[1][0].toFixed(1));l.setAttribute('y2',c[1][1].toFixed(1));l.setAttribute('stroke',col);l.setAttribute('stroke-width','.9');G.insertBefore(l,G.firstChild);}
function grid(q,n,m,cm,cj){var f=H(q);for(var i=0;i<=n;i++){var t=i/n,c=(i%m==0)?cj:cm;L(f(t,0),f(t,1),c);L(f(0,t),f(1,t),c);}}
grid([[436.6,508.7],[991,420],[1552,694],[501,1151]],24,4,'#46536a','#5f6d84');
grid([[436.6,508.7],[991,420],[1020,-63],[320,-137]],24,4,'#414e64','#57647b');
grid([[991,420],[1552,694],[1896,-332],[1020,-63]],24,4,'#414e64','#57647b');
})();
</script>
</body></html>
